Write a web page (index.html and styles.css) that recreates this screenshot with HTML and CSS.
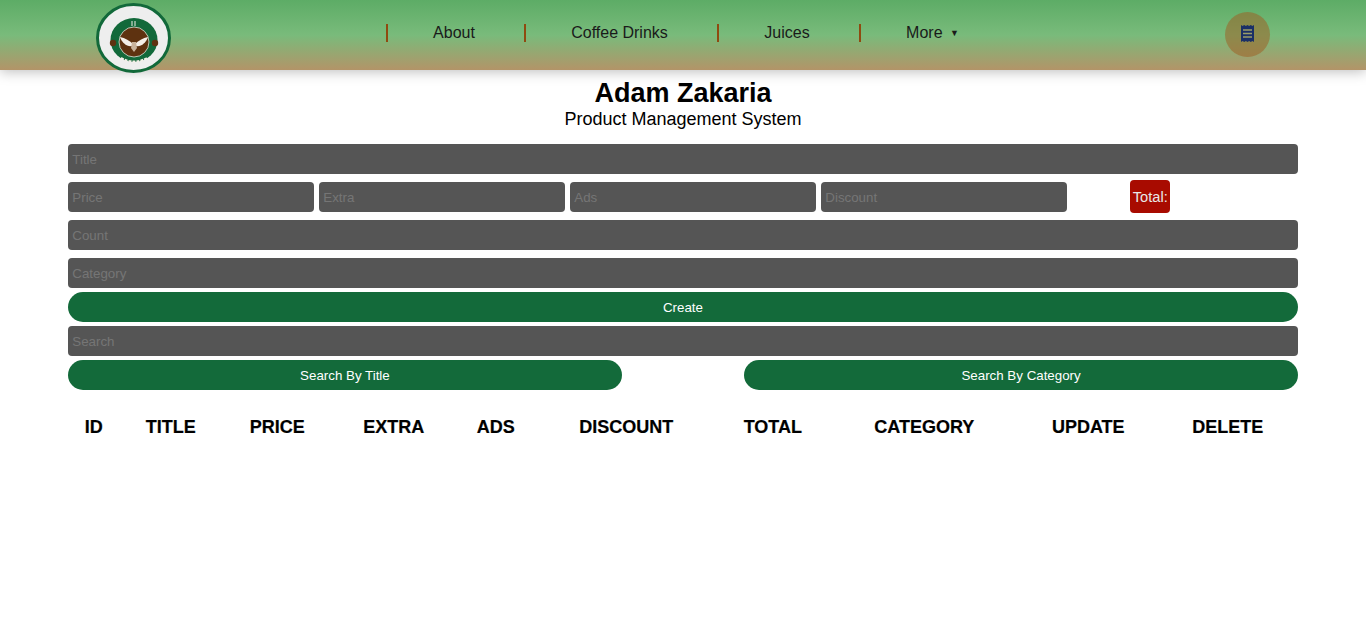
FILE: index.html
```html
<!DOCTYPE html>
<html lang="en">
<head>
  <meta charset="UTF-8">
  <meta name="viewport" content="width=device-width, initial-scale=1">
  <title>Adam Zakaria</title>
  <link rel="stylesheet" href="styles.css">
</head>
<body>

  <header class="header">
    <div class="logo">
      <svg viewBox="0 0 75 70" width="75" height="70">
        <ellipse cx="37.5" cy="35" rx="36" ry="33.5" fill="#eeeeee" stroke="#12693a" stroke-width="3"/>
        <ellipse cx="38" cy="37" rx="23.5" ry="22" fill="#12693a"/>
        <circle cx="17" cy="40" r="3.2" fill="#5e3210"/>
        <circle cx="59" cy="40" r="3.2" fill="#5e3210"/>
        <circle cx="38" cy="39" r="15" fill="#5e3210" stroke="#d9e6dc" stroke-width="0.8"/>
        <path d="M24 34 C29 35 34 38 37 41 L36 43 C31 44 26 40 24 34 Z" fill="#f4efe8"/>
        <path d="M52 34 C47 35 42 38 39 41 L40 43 C45 44 50 40 52 34 Z" fill="#f4efe8"/>
        <path d="M36 39 H40 L41 45 L38 49 L35 45 Z" fill="#c9b39c"/>
        <path d="M25 55 Q38 62 51 55" fill="none" stroke="#f4efe8" stroke-width="2" stroke-dasharray="3 1"/>
        <path d="M36 18 V23 M39 18 V23" stroke="#f4efe8" stroke-width="1"/>
      </svg>
    </div>
    <nav class="nav">
      <a class="nav-item nav-about" href="#">About</a>
      <a class="nav-item nav-coffee" href="#">Coffee Drinks</a>
      <a class="nav-item nav-juices" href="#">Juices</a>
      <a class="nav-item nav-more" href="#">More <span class="caret">▼</span></a>
    </nav>
    <div class="cart">
      <svg viewBox="0 0 13 17" width="13" height="17">
        <path d="M0 0 L1.6 1 L3.2 0 L4.9 1 L6.5 0 L8.1 1 L9.8 0 L11.4 1 L13 0 V17 L11.4 16 L9.8 17 L8.1 16 L6.5 17 L4.9 16 L3.2 17 L1.6 16 L0 17 Z" fill="#1a2f66"/>
        <path d="M2 5 H11 M2 8.5 H11 M2 12 H11" stroke="#9a9c68" stroke-width="1.3"/>
      </svg>
    </div>
  </header>

  <div class="crud">
    <div class="head">
      <h2>Adam Zakaria</h2>
      <p>Product Management System</p>
    </div>

    <div class="inputs">
      <input class="field" type="text" placeholder="Title">
      <div class="price-row">
        <input class="field small" type="number" placeholder="Price">
        <input class="field small" type="number" placeholder="Extra">
        <input class="field small" type="number" placeholder="Ads">
        <input class="field small" type="number" placeholder="Discount">
        <small class="total">Total:</small>
      </div>
      <input class="field" type="number" placeholder="Count">
      <input class="field tight" type="text" placeholder="Category">
      <button class="btn create">Create</button>
    </div>

    <div class="search-box">
      <input class="field tight" type="text" placeholder="Search">
      <div class="search-btns">
        <button class="btn half">Search By Title</button>
        <button class="btn half">Search By Category</button>
      </div>
    </div>

    <table class="products">
      <colgroup>
        <col class="col-id">
        <col class="col-title">
        <col class="col-price">
        <col class="col-extra">
        <col class="col-ads">
        <col class="col-discount">
        <col class="col-total">
        <col class="col-category">
        <col class="col-update">
        <col class="col-delete">
      </colgroup>
      <tr>
        <th>ID</th>
        <th>TITLE</th>
        <th>PRICE</th>
        <th>EXTRA</th>
        <th>ADS</th>
        <th>DISCOUNT</th>
        <th>TOTAL</th>
        <th>CATEGORY</th>
        <th>UPDATE</th>
        <th>DELETE</th>
      </tr>
    </table>
  </div>

</body>
</html>
```

FILE: styles.css
```css
* {
  box-sizing: border-box;
}
body {
  margin: 0;
  background: #fff;
  font-family: "Liberation Sans", Arial, sans-serif;
  color: #000;
}
.header {
  height: 70px;
  display: flex;
  align-items: center;
  background: linear-gradient(to bottom, #5dac66 0%, #79bb7b 50%, #b39468 100%);
  box-shadow: 0 2px 12px rgba(0, 0, 0, 0.25);
}
.logo {
  width: 75px;
  height: 70px;
  margin-left: 96px;
  margin-top: 6px;
  flex-shrink: 0;
}
.logo svg {
  display: block;
}
.nav {
  display: flex;
  margin-left: 215px;
  height: 18px;
  margin-top: -4px;
}
.nav-item {
  color: #1a1a1a;
  font-size: 16px;
  line-height: 18px;
  text-decoration: none;
  text-align: center;
  border-left: 2px solid #8f4a10;
}
.nav-about {
  width: 138px;
  padding-right: 4px;
}
.nav-coffee {
  width: 193px;
  padding-right: 4px;
}
.nav-juices {
  width: 142px;
  padding-right: 4px;
}
.nav-more {
  width: 190px;
  padding-right: 45px;
  white-space: nowrap;
}
.caret {
  font-size: 9px;
  vertical-align: 2px;
  margin-left: 3px;
}
.cart {
  width: 45px;
  height: 45px;
  margin-left: 176px;
  margin-top: -1px;
  border-radius: 50%;
  background: rgba(160, 90, 30, 0.5);
  display: flex;
  align-items: center;
  justify-content: center;
}
.cart svg {
  margin-top: -2px;
}
.crud {
  width: 90%;
  margin: 0 auto;
}
.head {
  text-align: center;
  padding-top: 8px;
  margin-bottom: 14px;
}
.head h2 {
  margin: 0 0 1px;
  font-size: 27px;
  line-height: 30px;
}
.head p {
  margin: 0;
  font-size: 18px;
  line-height: 21px;
}
.field {
  display: block;
  width: 100%;
  height: 30px;
  padding: 4px;
  margin-bottom: 8px;
  border: none;
  outline: none;
  border-radius: 4px;
  background: #555;
  color: #fff;
  font-family: "Liberation Sans", Arial, sans-serif;
  font-size: 13.33px;
}
.field::placeholder {
  color: #757575;
}
.field.tight {
  margin-bottom: 4px;
}
.price-row {
  display: flex;
  align-items: center;
  gap: 5px;
  height: 30px;
  margin-bottom: 8px;
}
.price-row .field {
  margin-bottom: 0;
}
.field.small {
  width: 246px;
}
.total {
  width: 40px;
  height: 33px;
  margin-left: 58px;
  margin-top: -1px;
  line-height: 35px;
  text-align: center;
  white-space: nowrap;
  border-radius: 4px;
  background: #a80b00;
  color: #e8e8e8;
  font-size: 14.67px;
}
.btn {
  display: block;
  height: 30px;
  padding: 0;
  border: none;
  border-radius: 15px;
  background: #136a3a;
  color: #fff;
  font-family: "Liberation Sans", Arial, sans-serif;
  font-size: 13.33px;
}
.create {
  width: 100%;
  margin-bottom: 4px;
}
.search-btns {
  display: flex;
  justify-content: space-between;
}
.half {
  width: 45%;
}
.products {
  width: 100%;
  margin-top: 20px;
  border-spacing: 0;
  table-layout: fixed;
}
.products th {
  padding: 7px 0;
  font-size: 18px;
  line-height: 20px;
  text-align: center;
  -webkit-text-stroke: 0.2px #000;
}
.col-id { width: 51px; }
.col-title { width: 103px; }
.col-price { width: 110px; }
.col-extra { width: 123px; }
.col-ads { width: 81px; }
.col-discount { width: 180px; }
.col-total { width: 113px; }
.col-category { width: 190px; }
.col-update { width: 138px; }
.col-delete { width: 141px; }
```
